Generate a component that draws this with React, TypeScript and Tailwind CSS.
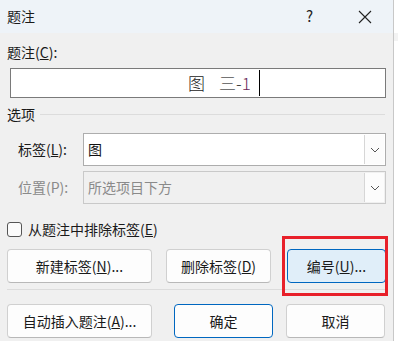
import React from 'react';

const font = { fontFamily: '"Noto Sans CJK SC", "Noto Sans", sans-serif' };

const Chevron = () => (
  <svg width="10" height="6" viewBox="0 0 10 6" fill="none">
    <path d="M1 1l4 4 4-4" stroke="#555" strokeWidth="1" />
  </svg>
);

const Btn = ({ children, className = '' }: { children: React.ReactNode; className?: string }) => (
  <div
    className={`flex items-center justify-center rounded-[4px] border text-[14px] text-[#1a1a1a] ${className}`}
  >
    {children}
  </div>
);

const Select = ({ value, disabled }: { value: string; disabled?: boolean }) => (
  <div
    className={`flex h-[33px] w-[303px] items-stretch border ${
      disabled ? 'border-[#c9c9c9] bg-[#f0f0f0] text-[#8a8a8a]' : 'border-[#adadad] bg-white text-[#111]'
    }`}
  >
    <div className="flex flex-1 items-center pl-[4px] text-[14px]">{value}</div>
    <div className="my-[1px] mr-[1px] flex w-[20px] items-center justify-center border-l border-[#d6d6d6] bg-[#fcfcfc]">
      <Chevron />
    </div>
  </div>
);

export default function App() {
  return (
    <div className="flex h-[341px] w-[398px] bg-white" style={font}>
      <div className="flex w-[394px] flex-col border-r border-[#c8c8c8] bg-[#f0f0f0]">
        {/* title bar */}
        <div className="flex h-[33px] items-center bg-[#eef3f8] pl-[7px]">
          <span className="text-[14px] text-[#1a1a1a]">题注</span>
          <span className="ml-[271px] text-[15px] text-[#222]">?</span>
          <svg className="ml-[45px]" width="14" height="14" viewBox="0 0 14 14">
            <path d="M1 1l12 12M13 1L1 13" stroke="#222" strokeWidth="1.1" />
          </svg>
        </div>

        <div className="flex flex-col px-[7px]">
          <div className="mt-[9px] h-[20px] text-[14px] leading-[20px] text-[#1a1a1a]">
            题注(<span className="underline">C</span>):
          </div>
          <div className="ml-[3px] mt-[6px] flex h-[30px] w-[376px] items-center border border-[#7a7a7a] bg-white pl-[177px] text-[17px] font-light text-[#333]">
            <span className="text-[#222]">图</span>
            <span className="ml-[14px] text-[#555]">三</span>
            <span className="text-[#333]">-</span>
            <span className="text-[#6a2a5a]">1</span>
            <span className="ml-[8px] h-[26px] w-[1px] bg-black" />
          </div>

          <div className="mt-[6px] flex h-[20px] items-center">
            <span className="text-[14px] text-[#1a1a1a]">选项</span>
            <div className="ml-[5px] mr-[1px] h-[1px] flex-1 bg-[#dcdcdc]" />
          </div>

          <div className="mt-[9px] flex items-center">
            <span className="w-[76px] pl-[11px] text-[14px] text-[#1a1a1a]">
              标签(<span className="underline">L</span>):
            </span>
            <Select value="图" />
          </div>
          <div className="mt-[5px] flex items-center">
            <span className="w-[76px] pl-[11px] text-[14px] text-[#8a8a8a]">位置(P):</span>
            <Select value="所选项目下方" disabled />
          </div>

          <div className="mt-[15px] flex items-center">
            <div className="h-[15px] w-[15px] rounded-[3px] border border-[#555] bg-[#fbfbfb]" />
            <span className="ml-[6px] text-[14px] text-[#1a1a1a]">
              从题注中排除标签(<span className="underline">E</span>)
            </span>
          </div>

          <div className="relative mt-[9px] flex items-center">
            <Btn className="h-[34px] w-[145px] border-[#d0d0d0] border-b-[#b8b8b8] bg-[#fdfdfd]">
              新建标签(<span className="underline">N</span>)...
            </Btn>
            <Btn className="ml-[14px] h-[34px] w-[105px] border-[#d0d0d0] border-b-[#b8b8b8] bg-[#fdfdfd]">
              删除标签(<span className="underline">D</span>)
            </Btn>
            <Btn className="ml-[16px] h-[34px] w-[99px] border-[#0067c0] bg-[#e0eef9]">
              编号(<span className="underline">U</span>)...
            </Btn>
            <div className="absolute left-[275px] top-[-13px] h-[60px] w-[106px] border-[3px] border-[#e8202a]" />
          </div>

          <div className="mt-[6px] h-[1px] w-[379px] bg-[#dcdcdc]" />

          <div className="mt-[14px] flex items-center">
            <Btn className="h-[34px] w-[145px] border-[#d0d0d0] border-b-[#b8b8b8] bg-[#fdfdfd]">
              自动插入题注(<span className="underline">A</span>)...
            </Btn>
            <Btn className="ml-[22px] h-[34px] w-[99px] border-[#0067c0] bg-[#fdfdfd]">确定</Btn>
            <Btn className="ml-[13px] h-[34px] w-[99px] border-[#d0d0d0] border-b-[#b8b8b8] bg-[#fdfdfd]">
              取消
            </Btn>
          </div>
        </div>
      </div>
      <div className="flex flex-1 flex-col bg-white">
        <div className="h-[33px] bg-white" />
        <div className="h-[8px] bg-[#f3f3f3]" />
      </div>
    </div>
  );
}
